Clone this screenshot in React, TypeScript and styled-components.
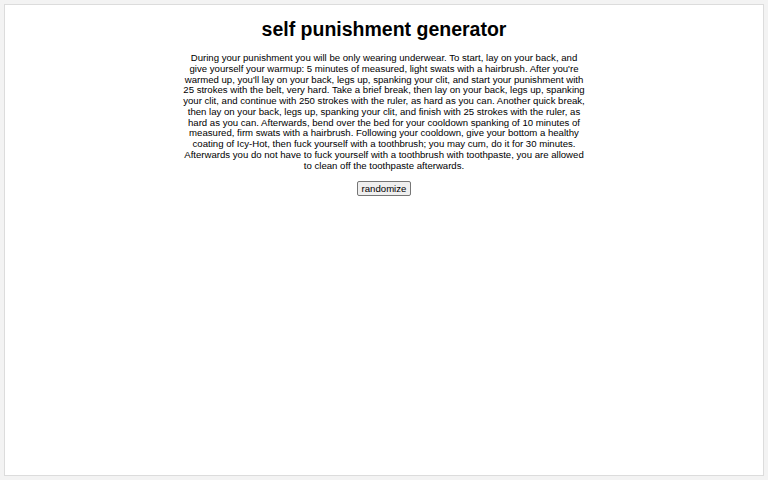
import React from "react";
import styled, { createGlobalStyle } from "styled-components";

const text =
	"During your punishment you will be only wearing underwear. To start, lay on your back, and give yourself your warmup: 5 minutes of measured, light swats with a hairbrush. After you're warmed up, you'll lay on your back, legs up, spanking your clit, and start your punishment with 25 strokes with the belt, very hard. Take a brief break, then lay on your back, legs up, spanking your clit, and continue with 250 strokes with the ruler, as hard as you can. Another quick break, then lay on your back, legs up, spanking your clit, and finish with 25 strokes with the ruler, as hard as you can. Afterwards, bend over the bed for your cooldown spanking of 10 minutes of measured, firm swats with a hairbrush. Following your cooldown, give your bottom a healthy coating of Icy-Hot, then fuck yourself with a toothbrush; you may cum, do it for 30 minutes. Afterwards you do not have to fuck yourself with a toothbrush with toothpaste, you are allowed to clean off the toothpaste afterwards.";

export default function App() {
	return (
		<>
			<GlobalStyle />
			<Page>
				<Card>
					<Title>self punishment generator</Title>
					<Result>{text}</Result>
					<Randomize>randomize</Randomize>
				</Card>
			</Page>
		</>
	);
}

const GlobalStyle = createGlobalStyle`
	html, body {
		margin: 0;
		background: #f3f3f3;
		font-family: "Liberation Sans", Arial, sans-serif;
	}
`;

const Page = styled.div`
	padding: 4px;
	height: 480px;
	box-sizing: border-box;
`;

const Card = styled.main`
	height: 472px;
	box-sizing: border-box;
	background: #fff;
	border: 1px solid #dcdcdc;
	display: flex;
	flex-direction: column;
	align-items: center;
	padding-top: 13px;
`;

const Title = styled.h1`
	margin: 0 0 13px;
	font-size: 19.5px;
	line-height: 22px;
	font-weight: bold;
	color: #000;
`;

const Result = styled.p`
	margin: 0 0 10px;
	width: 405px;
	font-size: 9.6px;
	line-height: 10.75px;
	text-align: center;
	color: #000;
`;

const Randomize = styled.button`
	font-family: "Liberation Sans", Arial, sans-serif;
	font-size: 9.6px;
	padding: 1px 4px;
	background: #efefef;
	border: 1px solid #767676;
	border-radius: 2px;
	color: #000;
`;
